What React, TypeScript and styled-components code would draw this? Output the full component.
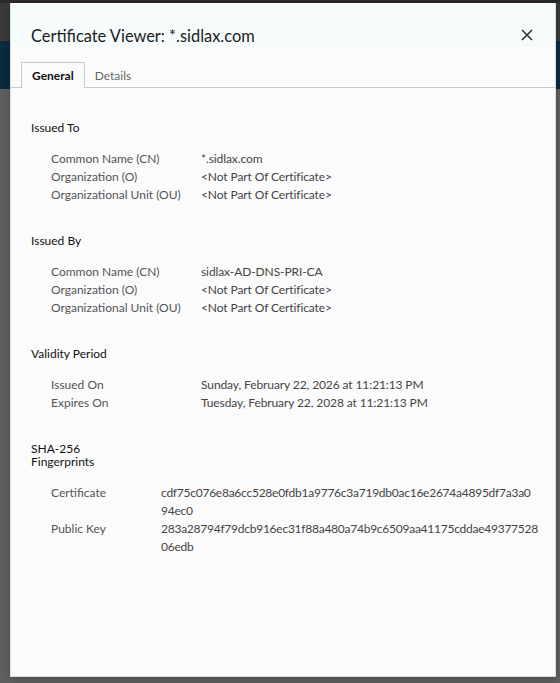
import styled, {createGlobalStyle} from "styled-components";

const GlobalStyle = createGlobalStyle`
  html, body {
    margin: 0;
    padding: 0;
    width: 560px;
    height: 683px;
    overflow: hidden;
    background: #636363;
    font-family: Lato, "Open Sans", sans-serif;
  }
`;

const Page = styled.div`
  position: relative;
  width: 560px;
  height: 683px;
  display: flex;
  flex-direction: column;
`;

const TopBar = styled.div`
  height: 3px;
  background: #2b2b2b;
`;

const AppHeader = styled.div`
  height: 38px;
  background: #3b3b3b;
`;

const NavyBand = styled.div`
  height: 48px;
  background: #0b2b42;
`;

const Rest = styled.div`
  flex: 1;
  background: #606060;
`;

const Dialog = styled.div`
  position: absolute;
  left: 10px;
  top: 3px;
  width: 544px;
  height: 673px;
  display: flex;
  flex-direction: column;
  background: #fbfbfb;
  border: 1px solid #d3dfe6;
  border-top: none;
  box-shadow: 0 2px 8px rgba(0, 0, 0, 0.25);
`;

const Header = styled.div`
  height: 44px;
  background: #f6fcfc;
  display: flex;
  align-items: flex-end;
  justify-content: space-between;
  padding: 0 20px 0 20px;
`;

const Title = styled.h1`
  margin: 0 0 -1px;
  font-size: 16.4px;
  font-weight: 400;
  color: #1b1b1b;
  line-height: 24px;
`;

const CloseButton = styled.button`
  border: none;
  background: none;
  padding: 0;
  margin-bottom: 4px;
  width: 16px;
  height: 16px;
  display: flex;
  align-items: center;
  justify-content: center;
  cursor: pointer;
`;

const TabBar = styled.div`
  display: flex;
  align-items: flex-end;
  padding: 15px 0 0 10px;
  border-bottom: 1px solid #c9c9c9;
`;

const Tab = styled.div<{$active?: boolean}>`
  height: 25px;
  padding: 0 ${p => (p.$active ? "10px" : "9px")};
  display: flex;
  align-items: center;
  font-size: 12px;
  font-weight: ${p => (p.$active ? 700 : 400)};
  color: ${p => (p.$active ? "#111" : "#666")};
  border: 1px solid ${p => (p.$active ? "#c9c9c9" : "transparent")};
  border-bottom: none;
  margin-bottom: -1px;
  background: ${p => (p.$active ? "#fbfbfb" : "transparent")};
`;

const Content = styled.div`
  padding: 33px 20px 0 20px;
  display: flex;
  flex-direction: column;
  gap: 30px;
`;

const Section = styled.section`
  display: flex;
  flex-direction: column;
`;

const SectionTitle = styled.div<{$narrow?: boolean}>`
  font-size: 12px;
  line-height: 13px;
  color: #111;
  margin-bottom: 16px;
  max-width: ${p => (p.$narrow ? "80px" : "none")};
`;

const Grid = styled.div<{$labelWidth: number}>`
  display: grid;
  grid-template-columns: ${p => p.$labelWidth}px 1fr;
  padding-left: 20px;
  font-size: 12px;
  line-height: 18px;
`;

const Label = styled.div`
  color: #555;
`;

const Value = styled.div<{$hex?: boolean}>`
  color: #444;
  letter-spacing: ${p => (p.$hex ? "-0.25px" : "-0.1px")};
`;

const HexLine = styled.span`
  display: block;
`;

type Row = [string, string];

const sections: {title: string; narrow?: boolean; hex?: boolean; labelWidth: number; rows: Row[]}[] = [
	{
		title: "Issued To",
		labelWidth: 150,
		rows: [
			["Common Name (CN)", "*.sidlax.com"],
			["Organization (O)", "<Not Part Of Certificate>"],
			["Organizational Unit (OU)", "<Not Part Of Certificate>"],
		],
	},
	{
		title: "Issued By",
		labelWidth: 150,
		rows: [
			["Common Name (CN)", "sidlax-AD-DNS-PRI-CA"],
			["Organization (O)", "<Not Part Of Certificate>"],
			["Organizational Unit (OU)", "<Not Part Of Certificate>"],
		],
	},
	{
		title: "Validity Period",
		labelWidth: 150,
		rows: [
			["Issued On", "Sunday, February 22, 2026 at 11:21:13\u202fPM"],
			["Expires On", "Tuesday, February 22, 2028 at 11:21:13\u202fPM"],
		],
	},
	{
		title: "SHA-256 Fingerprints",
		narrow: true,
		hex: true,
		labelWidth: 110,
		rows: [
			["Certificate", "cdf75c076e8a6cc528e0fdb1a9776c3a719db0ac16e2674a4895df7a3a094ec0"],
			["Public Key", "283a28794f79dcb916ec31f88a480a74b9c6509aa41175cddae4937752806edb"],
		],
	},
];

// fingerprints wrap at 59 hex chars like the original viewer
const chunk = (s: string, n: number) => s.match(new RegExp(`.{1,${n}}`, "g")) ?? [s];

export default function App() {
	return (
		<>
			<GlobalStyle />
			<Page>
				<TopBar />
				<AppHeader />
				<NavyBand />
				<Rest />
				<Dialog>
					<Header>
						<Title>Certificate Viewer: *.sidlax.com</Title>
						<CloseButton aria-label="Close">
							<svg width="12" height="12" viewBox="0 0 12 12">
								<path d="M1 1 L11 11 M11 1 L1 11" stroke="#333" strokeWidth="1.6" />
							</svg>
						</CloseButton>
					</Header>
					<TabBar>
						<Tab $active>General</Tab>
						<Tab>Details</Tab>
					</TabBar>
					<Content>
						{sections.map(s => (
							<Section key={s.title}>
								<SectionTitle $narrow={s.narrow}>{s.title}</SectionTitle>
								<Grid $labelWidth={s.labelWidth}>
									{s.rows.map(([label, value]) => [
										<Label key={label}>{label}</Label>,
										<Value key={label + "-v"} $hex={s.hex}>
											{s.hex
												? chunk(value, 59).map(line => <HexLine key={line}>{line}</HexLine>)
												: value}
										</Value>,
									])}
								</Grid>
							</Section>
						))}
					</Content>
				</Dialog>
			</Page>
		</>
	);
}
